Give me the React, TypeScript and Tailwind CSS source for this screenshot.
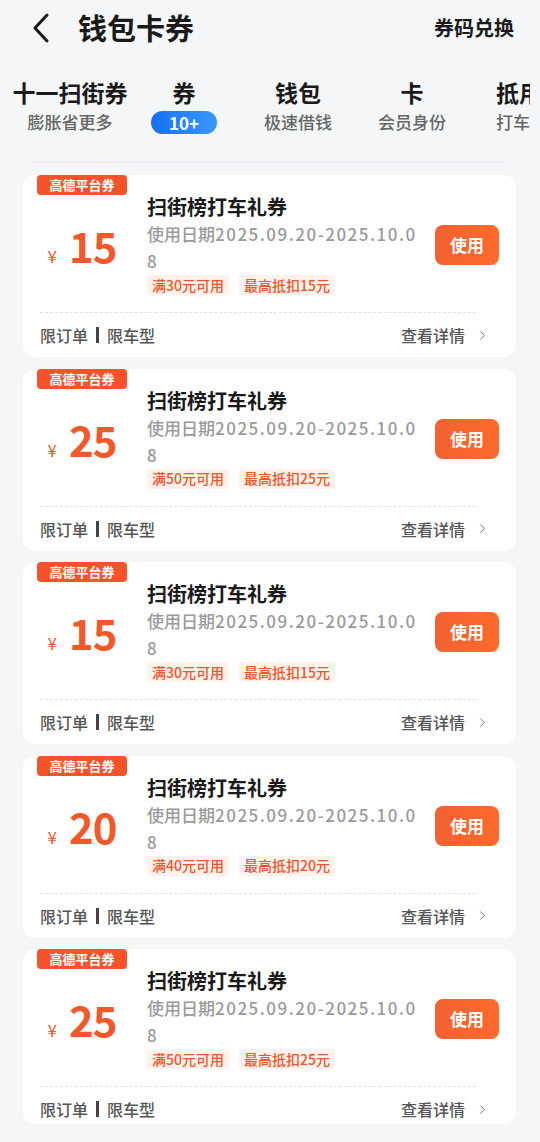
import { ChevronRight } from 'lucide-react'

const FONT = '"Noto Sans CJK SC", "Noto Sans", sans-serif'

const tabs = [
  { title: '十一扫街券', sub: '膨胀省更多' },
  { title: '券', badge: '10+' },
  { title: '钱包', sub: '极速借钱' },
  { title: '卡', sub: '会员身份' },
]

const coupons = [
  { amount: 15, min: 30 },
  { amount: 25, min: 50 },
  { amount: 15, min: 30 },
  { amount: 20, min: 40 },
  { amount: 25, min: 50 },
]

function CouponCard({ amount, min, last }: { amount: number; min: number; last?: boolean }) {
  return (
    <div className="relative rounded-[12px] bg-white">
      {/* platform badge */}
      <span className="absolute top-0 left-[14px] flex h-[20px] w-[90px] items-center justify-center rounded-[4px] bg-[#f5542b] text-[13px] font-bold text-white">
        高德平台券
      </span>

      <div className="flex items-center pt-[20px] pr-[17px]">
        <div className="flex w-[118px] shrink-0 items-baseline justify-center gap-[12px] text-[#f3582a]">
          <span className="text-[17px] leading-none">¥</span>
          <span className="text-[42px] leading-none font-bold tracking-[-1px]">{amount}</span>
        </div>
        <div className="ml-[6px] flex flex-1 flex-col">
          <p className="text-[20px] leading-[24px] font-bold text-[#1a1a1a]">扫街榜打车礼券</p>
          <p className="mt-[1px] text-[17px] leading-[27px] font-medium text-[#9a9a9a]">
            <span className="whitespace-nowrap">
              使用日期<span className="tracking-[1.5px]">2025.09.20-2025.10.0</span>
            </span>
            <br />8
          </p>
          <div className="mt-[1px] flex gap-[10px]">
            <span className="flex h-[20px] items-center rounded-[2px] bg-[#fff1ec] px-[5px] text-[14px] font-medium text-[#f0552a]">
              满{min}元可用
            </span>
            <span className="flex h-[20px] items-center rounded-[2px] bg-[#fff1ec] px-[5px] text-[14px] font-medium text-[#f0552a]">
              最高抵扣{amount}元
            </span>
          </div>
        </div>
        <button className="flex h-[40px] w-[64px] shrink-0 items-center justify-center rounded-[8px] bg-gradient-to-r from-[#f2622f] to-[#ff6a2c] text-[17px] font-bold text-white">
          使用
        </button>
      </div>

      <div className="mt-[17px] mr-[40px] ml-[17px] border-t border-dashed border-[#e2e2e2]" />

      <div
        className={
          'flex items-center justify-between pt-[11px] pr-[26px] pl-[17px] text-[16px] leading-[22px] font-medium text-[#555] ' +
          (last ? 'pb-[4px]' : 'pb-[11px]')
        }
      >
        <span className="flex items-center">
          限订单
          <span className="mx-[8px] h-[16px] w-[3px] bg-[#444]" />
          限车型
        </span>
        <span className="flex items-center gap-[10px]">
          查看详情
          <ChevronRight size={15} strokeWidth={1.6} className="text-[#777]" />
        </span>
      </div>
    </div>
  )
}

export default function App() {
  return (
    <div className="min-h-[1142px] w-[540px] overflow-hidden bg-[#f5f6f8]" style={{ fontFamily: FONT }}>
      {/* Header */}
      <header className="flex h-[56px] items-center pr-[26px] pl-[31px]">
        <svg width="20" height="30" viewBox="0 0 20 30" fill="none" className="shrink-0">
          <path d="M16 2 L4 15 L16 28" stroke="#1a1a1a" strokeWidth="3" strokeLinecap="round" strokeLinejoin="round" />
        </svg>
        <h1 className="ml-[27px] text-[29px] font-bold text-[#1a1a1a]">钱包卡券</h1>
        <span className="ml-auto text-[20px] font-bold text-[#1a1a1a]">券码兑换</span>
      </header>

      {/* Tabs */}
      <nav className="mt-[22px] flex pl-[13px]">
        {tabs.map((t) => (
          <div key={t.title} className="flex w-[114px] shrink-0 flex-col items-center">
            <span className="text-[23px] leading-[28px] font-bold whitespace-nowrap text-[#1a1a1a]">{t.title}</span>
            {t.badge ? (
              <span className="mt-[5px] flex h-[23px] w-[66px] items-center justify-center rounded-full bg-gradient-to-r from-[#1670ef] to-[#3b97ff] text-[17px] leading-none font-bold text-white">
                {t.badge}
              </span>
            ) : (
              <span className="mt-[5px] text-[17px] leading-[22px] font-medium whitespace-nowrap text-[#666]">{t.sub}</span>
            )}
          </div>
        ))}
        {/* partially scrolled-off tab */}
        <div className="flex w-[61px] shrink-0 flex-col overflow-hidden pl-[27px]">
          <span className="text-[23px] leading-[28px] font-bold whitespace-nowrap text-[#1a1a1a]">抵用券</span>
          <span className="mt-[5px] text-[17px] leading-[22px] font-medium whitespace-nowrap text-[#666]">打车券</span>
        </div>
      </nav>

      <div className="mx-[32px] mt-[28px] h-px bg-[#eaecef]" />

      {/* Coupons */}
      <div className="mt-[12px] flex flex-col gap-[11.5px] px-[23px] pr-[24px]">
        {coupons.map((c, i) => (
          <CouponCard key={i} amount={c.amount} min={c.min} last={i === coupons.length - 1} />
        ))}
      </div>
    </div>
  )
}
